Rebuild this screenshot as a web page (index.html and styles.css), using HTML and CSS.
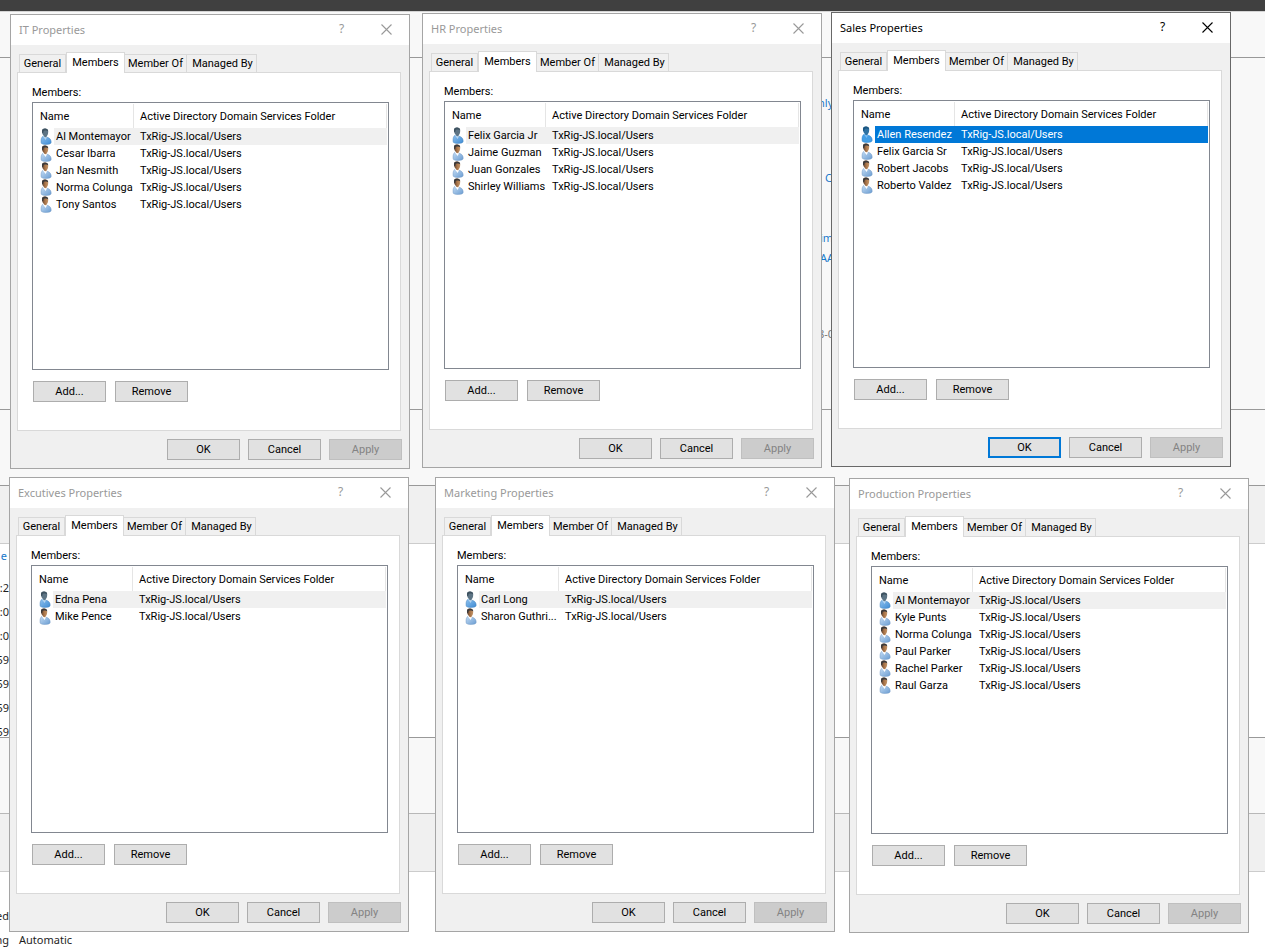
FILE: index.html
```html
<!DOCTYPE html>
<html lang="en">
<head>
<meta charset="utf-8">
<title>Group Properties</title>
<link rel="stylesheet" href="styles.css">
</head>
<body>
<svg class="defs" aria-hidden="true">
  <defs>
    <linearGradient id="coat" x1="0" y1="0" x2="1" y2="1"><stop offset="0" stop-color="#c4dcf4"/><stop offset="1" stop-color="#6b9dd2"/></linearGradient>
    <linearGradient id="face" x1="0" y1="0" x2="1" y2="0"><stop offset="0" stop-color="#5b4030"/><stop offset=".5" stop-color="#a97448"/><stop offset="1" stop-color="#c4966a"/></linearGradient>
    <linearGradient id="coat-on" x1="0" y1="0" x2="1" y2="1"><stop offset="0" stop-color="#8fc1ee"/><stop offset="1" stop-color="#3f8cd4"/></linearGradient>
    <symbol id="user" viewBox="0 0 12 17">
      <path d="M1.2 15.2C.8 12 1 9.4 3.2 8L6 9c3 .4 5.2 2 5.2 5.2 0 1.6-2 2.2-4.8 2.2-2.4 0-4.3-.3-5.2-1.2z" fill="url(#coat)" stroke="#6e97c4" stroke-width=".5"/>
      <path d="M2.8 8.2L5.6 12 7 9.2 5.8 7.6z" fill="#fff"/>
      <path d="M2 3c0-1.600 1.400-2.400 3-2.400S8.200 1.600 8.200 3.500c0 2-.4 3.500-1.400 4.600L6.300 9.300 4.600 9 3.600 7.500C2.400 6.600 2 4.800 2 3z" fill="url(#face)"/>
      <path d="M2 4.600C1.600 1.800 2.800.5 5 .5c2 0 3.300 1 3.200 2.700C7 2.300 5 2.400 3.700 3L3 5.500z" fill="#3b3a3c"/>
    </symbol>
    <symbol id="user-focus" viewBox="0 0 12 17">
      <path d="M1.200 15.200C.8 12 1 9.400 3.200 8L6 9c3 .4 5.200 2 5.200 5.200 0 1.600-2 2.200-4.800 2.200-2.400 0-4.300-.3-5.200-1.200z" fill="url(#coat-on)" stroke="#4684be" stroke-width=".5"/>
      <path d="M2.800 8.200L5.600 12 7 9.200 5.800 7.600z" fill="#b5d4f0"/>
      <path d="M2 3c0-1.600 1.400-2.400 3-2.400S8.200 1.600 8.200 3.500c0 2-.4 3.500-1.400 4.600L6.300 9.300 4.600 9 3.600 7.500C2.400 6.600 2 4.800 2 3z" fill="#5d7484"/>
      <path d="M2 4.600C1.600 1.800 2.800.5 5 .5c2 0 3.300 1 3.200 2.700C7 2.300 5 2.400 3.700 3L3 5.500z" fill="#3e5260"/>
    </symbol>
    <symbol id="user-selected" viewBox="0 0 12 17">
      <path d="M1.200 15.200C.8 12 1 9.400 3.200 8L6 9c3 .4 5.200 2 5.200 5.200 0 1.600-2 2.200-4.800 2.200-2.400 0-4.300-.3-5.200-1.200z" fill="#459ee4" stroke="#1f7fd0" stroke-width=".5"/>
      <path d="M2.800 8.200L5.600 12 7 9.200 5.800 7.600z" fill="#7cbcf0"/>
      <path d="M2 3c0-1.600 1.400-2.400 3-2.400S8.200 1.600 8.200 3.500c0 2-.4 3.500-1.400 4.600L6.300 9.300 4.600 9 3.600 7.500C2.400 6.600 2 4.800 2 3z" fill="#2e72a3"/>
      <path d="M2 4.600C1.600 1.800 2.800.5 5 .5c2 0 3.300 1 3.200 2.700C7 2.300 5 2.400 3.700 3L3 5.500z" fill="#1b5580"/>
    </symbol>
    <symbol id="close" viewBox="0 0 11 11"><path d="M.5.5l10 10M10.5.5l-10 10" fill="none" stroke="currentColor" stroke-width="1.1"/></symbol>
  </defs>
</svg>

<main class="desktop">
  <div class="backdrop">
    <div class="band band-bar"></div>
    <div class="band band-head"></div>
    <div class="band band-props">
      <div class="peek peek-a">nly</div>
      <div class="peek peek-b">C</div>
      <div class="peek peek-c">im</div>
      <div class="peek peek-d">AA</div>
      <div class="peek peek-e">8-0</div>
    </div>
    <div class="band band-gap"></div>
    <div class="band band-title"></div>
    <div class="band band-events">
      <div class="edge edge-link">e</div>
      <div class="edge">0:2</div>
      <div class="edge">0:0</div>
      <div class="edge">0:0</div>
      <div class="edge">59</div>
      <div class="edge">59</div>
      <div class="edge">59</div>
      <div class="edge">59</div>
    </div>
    <div class="band band-space"></div>
    <div class="band band-services"></div>
    <div class="band-rows">
      <div class="service"><span class="edge">ed</span></div>
      <div class="service"><span class="edge">ng</span><span>Automatic</span></div>
    </div>
  </div>

  <section class="window win-it" aria-label="IT Properties">
    <header class="titlebar"><h2 class="title">IT Properties</h2><button class="sys" aria-label="Help">?</button><button class="sys" aria-label="Close"><svg class="x"><use href="#close"/></svg></button></header>
    <nav class="tabs"><button class="tab tab-general">General</button><button class="tab tab-members">Members</button><button class="tab tab-of">Member Of</button><button class="tab tab-by">Managed By</button></nav>
    <div class="panel">
      <div class="label">Members:</div>
      <div class="list">
        <table class="members">
          <thead><tr><th class="col-name">Name</th><th>Active Directory Domain Services Folder</th></tr></thead>
          <tbody>
            <tr class="focus"><td><div class="person"><svg class="icon"><use href="#user-focus"/></svg><span class="name">Al Montemayor</span></div></td><td>TxRig-JS.local/Users</td></tr>
            <tr><td><div class="person"><svg class="icon"><use href="#user"/></svg><span class="name">Cesar Ibarra</span></div></td><td>TxRig-JS.local/Users</td></tr>
            <tr><td><div class="person"><svg class="icon"><use href="#user"/></svg><span class="name">Jan Nesmith</span></div></td><td>TxRig-JS.local/Users</td></tr>
            <tr><td><div class="person"><svg class="icon"><use href="#user"/></svg><span class="name">Norma Colunga</span></div></td><td>TxRig-JS.local/Users</td></tr>
            <tr><td><div class="person"><svg class="icon"><use href="#user"/></svg><span class="name">Tony Santos</span></div></td><td>TxRig-JS.local/Users</td></tr>
          </tbody>
        </table>
      </div>
      <div class="edit"><button class="btn">Add...</button><button class="btn">Remove</button></div>
    </div>
    <footer class="actions"><button class="btn">OK</button><button class="btn">Cancel</button><button class="btn" disabled>Apply</button></footer>
  </section>

  <section class="window win-hr" aria-label="HR Properties">
    <header class="titlebar"><h2 class="title">HR Properties</h2><button class="sys" aria-label="Help">?</button><button class="sys" aria-label="Close"><svg class="x"><use href="#close"/></svg></button></header>
    <nav class="tabs"><button class="tab tab-general">General</button><button class="tab tab-members">Members</button><button class="tab tab-of">Member Of</button><button class="tab tab-by">Managed By</button></nav>
    <div class="panel">
      <div class="label">Members:</div>
      <div class="list">
        <table class="members">
          <thead><tr><th class="col-name">Name</th><th>Active Directory Domain Services Folder</th></tr></thead>
          <tbody>
            <tr class="focus"><td><div class="person"><svg class="icon"><use href="#user-focus"/></svg><span class="name">Felix Garcia Jr</span></div></td><td>TxRig-JS.local/Users</td></tr>
            <tr><td><div class="person"><svg class="icon"><use href="#user"/></svg><span class="name">Jaime Guzman</span></div></td><td>TxRig-JS.local/Users</td></tr>
            <tr><td><div class="person"><svg class="icon"><use href="#user"/></svg><span class="name">Juan Gonzales</span></div></td><td>TxRig-JS.local/Users</td></tr>
            <tr><td><div class="person"><svg class="icon"><use href="#user"/></svg><span class="name">Shirley Williams</span></div></td><td>TxRig-JS.local/Users</td></tr>
          </tbody>
        </table>
      </div>
      <div class="edit"><button class="btn">Add...</button><button class="btn">Remove</button></div>
    </div>
    <footer class="actions"><button class="btn">OK</button><button class="btn">Cancel</button><button class="btn" disabled>Apply</button></footer>
  </section>

  <section class="window win-sales active" aria-label="Sales Properties">
    <header class="titlebar"><h2 class="title">Sales Properties</h2><button class="sys" aria-label="Help">?</button><button class="sys" aria-label="Close"><svg class="x"><use href="#close"/></svg></button></header>
    <nav class="tabs"><button class="tab tab-general">General</button><button class="tab tab-members">Members</button><button class="tab tab-of">Member Of</button><button class="tab tab-by">Managed By</button></nav>
    <div class="panel">
      <div class="label">Members:</div>
      <div class="list">
        <table class="members">
          <thead><tr><th class="col-name">Name</th><th>Active Directory Domain Services Folder</th></tr></thead>
          <tbody>
            <tr class="selected"><td><div class="person"><svg class="icon"><use href="#user-selected"/></svg><span class="name">Allen Resendez</span></div></td><td>TxRig-JS.local/Users</td></tr>
            <tr><td><div class="person"><svg class="icon"><use href="#user"/></svg><span class="name">Felix Garcia Sr</span></div></td><td>TxRig-JS.local/Users</td></tr>
            <tr><td><div class="person"><svg class="icon"><use href="#user"/></svg><span class="name">Robert Jacobs</span></div></td><td>TxRig-JS.local/Users</td></tr>
            <tr><td><div class="person"><svg class="icon"><use href="#user"/></svg><span class="name">Roberto Valdez</span></div></td><td>TxRig-JS.local/Users</td></tr>
          </tbody>
        </table>
      </div>
      <div class="edit"><button class="btn">Add...</button><button class="btn">Remove</button></div>
    </div>
    <footer class="actions"><button class="btn btn-default">OK</button><button class="btn">Cancel</button><button class="btn" disabled>Apply</button></footer>
  </section>

  <section class="window win-exec" aria-label="Excutives Properties">
    <header class="titlebar"><h2 class="title">Excutives Properties</h2><button class="sys" aria-label="Help">?</button><button class="sys" aria-label="Close"><svg class="x"><use href="#close"/></svg></button></header>
    <nav class="tabs"><button class="tab tab-general">General</button><button class="tab tab-members">Members</button><button class="tab tab-of">Member Of</button><button class="tab tab-by">Managed By</button></nav>
    <div class="panel">
      <div class="label">Members:</div>
      <div class="list">
        <table class="members">
          <thead><tr><th class="col-name">Name</th><th>Active Directory Domain Services Folder</th></tr></thead>
          <tbody>
            <tr class="focus"><td><div class="person"><svg class="icon"><use href="#user-focus"/></svg><span class="name">Edna Pena</span></div></td><td>TxRig-JS.local/Users</td></tr>
            <tr><td><div class="person"><svg class="icon"><use href="#user"/></svg><span class="name">Mike Pence</span></div></td><td>TxRig-JS.local/Users</td></tr>
          </tbody>
        </table>
      </div>
      <div class="edit"><button class="btn">Add...</button><button class="btn">Remove</button></div>
    </div>
    <footer class="actions"><button class="btn">OK</button><button class="btn">Cancel</button><button class="btn" disabled>Apply</button></footer>
  </section>

  <section class="window win-marketing" aria-label="Marketing Properties">
    <header class="titlebar"><h2 class="title">Marketing Properties</h2><button class="sys" aria-label="Help">?</button><button class="sys" aria-label="Close"><svg class="x"><use href="#close"/></svg></button></header>
    <nav class="tabs"><button class="tab tab-general">General</button><button class="tab tab-members">Members</button><button class="tab tab-of">Member Of</button><button class="tab tab-by">Managed By</button></nav>
    <div class="panel">
      <div class="label">Members:</div>
      <div class="list">
        <table class="members">
          <thead><tr><th class="col-name">Name</th><th>Active Directory Domain Services Folder</th></tr></thead>
          <tbody>
            <tr class="focus"><td><div class="person"><svg class="icon"><use href="#user-focus"/></svg><span class="name">Carl Long</span></div></td><td>TxRig-JS.local/Users</td></tr>
            <tr><td><div class="person"><svg class="icon"><use href="#user"/></svg><span class="name">Sharon Guthri...</span></div></td><td>TxRig-JS.local/Users</td></tr>
          </tbody>
        </table>
      </div>
      <div class="edit"><button class="btn">Add...</button><button class="btn">Remove</button></div>
    </div>
    <footer class="actions"><button class="btn">OK</button><button class="btn">Cancel</button><button class="btn" disabled>Apply</button></footer>
  </section>

  <section class="window win-production" aria-label="Production Properties">
    <header class="titlebar"><h2 class="title">Production Properties</h2><button class="sys" aria-label="Help">?</button><button class="sys" aria-label="Close"><svg class="x"><use href="#close"/></svg></button></header>
    <nav class="tabs"><button class="tab tab-general">General</button><button class="tab tab-members">Members</button><button class="tab tab-of">Member Of</button><button class="tab tab-by">Managed By</button></nav>
    <div class="panel">
      <div class="label">Members:</div>
      <div class="list">
        <table class="members">
          <thead><tr><th class="col-name">Name</th><th>Active Directory Domain Services Folder</th></tr></thead>
          <tbody>
            <tr class="focus"><td><div class="person"><svg class="icon"><use href="#user-focus"/></svg><span class="name">Al Montemayor</span></div></td><td>TxRig-JS.local/Users</td></tr>
            <tr><td><div class="person"><svg class="icon"><use href="#user"/></svg><span class="name">Kyle Punts</span></div></td><td>TxRig-JS.local/Users</td></tr>
            <tr><td><div class="person"><svg class="icon"><use href="#user"/></svg><span class="name">Norma Colunga</span></div></td><td>TxRig-JS.local/Users</td></tr>
            <tr><td><div class="person"><svg class="icon"><use href="#user"/></svg><span class="name">Paul Parker</span></div></td><td>TxRig-JS.local/Users</td></tr>
            <tr><td><div class="person"><svg class="icon"><use href="#user"/></svg><span class="name">Rachel Parker</span></div></td><td>TxRig-JS.local/Users</td></tr>
            <tr><td><div class="person"><svg class="icon"><use href="#user"/></svg><span class="name">Raul Garza</span></div></td><td>TxRig-JS.local/Users</td></tr>
          </tbody>
        </table>
      </div>
      <div class="edit"><button class="btn">Add...</button><button class="btn">Remove</button></div>
    </div>
    <footer class="actions"><button class="btn">OK</button><button class="btn">Cancel</button><button class="btn" disabled>Apply</button></footer>
  </section>
</main>
</body>
</html>
```
FILE: styles.css
```css
* { box-sizing: border-box; }

body {
  margin: 0;
  background: #fff;
  color: #000;
  font: 11px/16px Roboto, "Liberation Sans", sans-serif;
}

button {
  margin: 0;
  padding: 0;
  font: inherit;
  color: inherit;
  white-space: nowrap;
}

.defs { position: absolute; width: 0; height: 0; }

.desktop { position: relative; overflow: hidden; min-height: 100vh; }

/* Server manager page behind the dialogs */
.backdrop { font: 11px/24px "Noto Sans", "Open Sans", sans-serif; color: #1e1e1e; }
.band { background: #f8f8f8; border-bottom: 1px solid #999; }
.band-bar { height: 12px; background: #404040; border-color: #d4d4d4; }
.band-head { height: 46px; }
.band-props { height: 352px; padding: 35px 0 0 818px; }
.band-gap { height: 76px; }
.band-title { height: 58px; background: #f0f0f0; border-color: #ccc; }
.band-events { height: 194px; background: #fff; }
.band-space { height: 76px; border-color: #b8b8b8; }
.band-services { height: 58px; background: #f0f0f0; border-color: #ccc; }
.band-rows { padding-top: 32px; }

.peek { line-height: 20px; color: #1979ca; }
.peek-a { margin-bottom: 55px; }
.peek-b { margin-bottom: 40px; padding-left: 7px; }
.peek-c { padding-left: 2px; }
.peek-d { margin-bottom: 56px; padding-left: 2px; }
.peek-e { color: #777; }

.edge { display: flex; justify-content: flex-end; width: 9px; }
.edge-link { width: 7px; margin-bottom: 8px; color: #1979ca; }
.service { display: flex; gap: 10px; }

/* Dialog windows */
.window {
  position: absolute;
  width: 400px;
  background: #f0f0f0;
  border: 1px solid #a5a5a5;
}
.window.active { border-color: #686868; }
.win-it { left: 10px; top: 14px; }
.win-hr { left: 422px; top: 13px; }
.win-sales { left: 831px; top: 12px; }
.win-exec { left: 9px; top: 477px; }
.win-marketing { left: 435px; top: 477px; }
.win-production { left: 849px; top: 478px; }

.titlebar {
  display: flex;
  align-items: center;
  height: 30px;
  padding-left: 8px;
  background: #fff;
  color: #999;
}
.active .titlebar { color: #000; }
.title {
  flex: 1;
  margin: 0;
  font: 11px/16px "Noto Sans", "Open Sans", sans-serif;
}
.sys {
  display: grid;
  place-items: center;
  width: 45px;
  height: 30px;
  padding-bottom: 2px;
  border: 0;
  background: none;
  font: 12px/16px "Noto Sans", "Open Sans", sans-serif;
}
.x { width: 11px; height: 11px; }

.tabs {
  display: flex;
  align-items: flex-end;
  height: 27px;
  padding-left: 8px;
}
.tab {
  height: 18px;
  padding-top: 1px;
  border: 1px solid #d9d9d9;
  border-width: 1px 1px 0 0;
  background: #f0f0f0;
}
.tab-general { width: 47px; border-left-width: 1px; }
.tab-members {
  z-index: 1;
  width: 59px;
  height: 21px;
  margin-bottom: -1px;
  padding: 0 0 1px;
  border-left-width: 1px;
  background: #fff;
}
.tab-of { width: 62px; }
.tab-by { width: 70px; padding-left: 2px; }

.panel {
  margin: 0 8px 0 6px;
  padding: 12px 11px 28px 14px;
  border: 1px solid #d9d9d9;
  background: #fff;
}
.label { margin-bottom: 1px; }

.list {
  height: 268px;
  padding: 1px 1px 0 0;
  border: 1px solid #828790;
}
.members {
  width: 100%;
  border-spacing: 0;
  table-layout: fixed;
  text-align: left;
}
.members th {
  height: 24px;
  padding: 1px 0 0 6px;
  border-right: 1px solid #e5e5e5;
  font-weight: 400;
}
.members .col-name { width: 101px; padding-left: 7px; }
.members td { height: 17px; padding: 0; white-space: nowrap; }
.members td + td { padding: 1px 0 0 6px; }
.person { display: flex; padding-left: 7px; }
.icon { width: 12px; height: 17px; margin-right: 2px; }
.name { flex: 1; padding: 1px 0 0 2px; }
.focus .name, .focus td + td { background: #f0f0f0; }
.selected .name, .selected td + td { background: #0078d7; color: #fff; }

.edit { display: flex; gap: 9px; margin: 11px 0 0 1px; }
.actions {
  display: flex;
  justify-content: flex-end;
  gap: 8px;
  padding: 8px 7px;
}
.btn {
  width: 73px;
  height: 21px;
  padding-top: 1px;
  border: 1px solid #adadad;
  background: #e1e1e1;
}
.btn-default { border: 2px solid #0078d7; }
.btn:disabled { border-color: #bfbfbf; background: #ccc; color: #838383; }
```
